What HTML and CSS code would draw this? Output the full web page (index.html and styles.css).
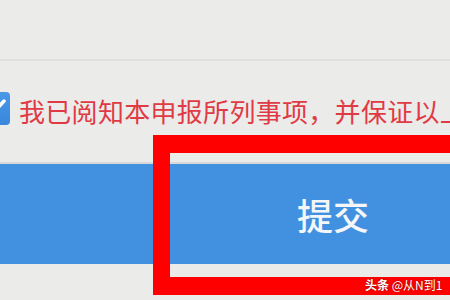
FILE: index.html
```html
<!DOCTYPE html>
<html lang="zh">
<head>
<meta charset="utf-8">
<link rel="stylesheet" href="styles.css">
</head>
<body>
<div class="page">
  <div class="top-area"></div>
  <div class="agree-row">
    <span class="checkbox">
      <svg width="33" height="33" viewBox="0 0 33 33"><path d="M8 17 L14 23 L27 9" fill="none" stroke="#fff" stroke-width="3.5" stroke-linecap="round" stroke-linejoin="round"/></svg>
    </span>
    <span class="agree-text">我已阅知本申报所列事项，并保证以上</span>
  </div>
  <div class="btn-wrap">
    <div class="submit-btn">提交</div>
  </div>
  <div class="highlight-box"></div>
  <div class="watermark"><b>头条</b> @从N到1</div>
</div>
</body>
</html>
```
FILE: styles.css
```css
html, body {
  margin: 0;
  padding: 0;
  overflow: hidden;
  width: 450px;
  height: 300px;
  background: #ebebea;
}
.page {
  position: relative;
  width: 450px;
  height: 300px;
  font-family: "Noto Sans CJK SC", "Noto Sans", sans-serif;
}
.top-area {
  height: 59px;
  border-bottom: 2px solid #e0e0de;
}
.agree-row {
  display: flex;
  align-items: center;
  margin-top: 29px;
  height: 36px;
  white-space: nowrap;
}
.checkbox {
  flex: none;
  width: 33px;
  height: 33px;
  margin-left: -23px;
  margin-right: 9px;
  border-radius: 4px;
  background: linear-gradient(#4a98e6, #3887dc);
  display: flex;
}
.agree-text {
  font-size: 26px;
  letter-spacing: 0.3px;
  line-height: 36px;
  color: #e03a44;
  margin-top: 6px;
}
.btn-wrap {
  margin-top: 36px;
  border-top: 2px solid #d6d8da;
  width: 666px;
}
.submit-btn {
  height: 100px;
  background: #4290e0;
  color: #f4f6f8;
  font-size: 36px;
  font-weight: 500;
  display: flex;
  align-items: center;
  justify-content: center;
}
.highlight-box {
  position: absolute;
  left: 153px;
  top: 135px;
  width: 320px;
  height: 124px;
  border: 17px solid #ff0000;
  border-top-width: 18px;
  border-bottom-width: 18px;
}
.watermark {
  position: absolute;
  left: 365px;
  top: 277px;
  font-size: 12px;
  line-height: 15px;
  color: #ffffff;
  text-shadow: 0 0 2px rgba(0,0,0,0.5);
  white-space: nowrap;
}
.watermark b { font-weight: 700; }
```
